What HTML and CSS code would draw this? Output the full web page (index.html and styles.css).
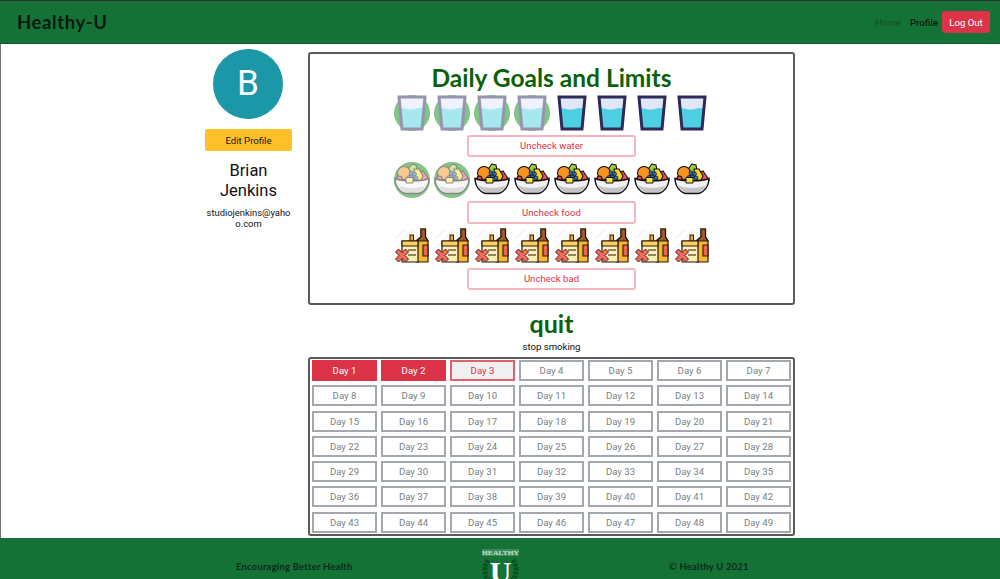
FILE: index.html
```html
<!DOCTYPE html>
<html>
<head>
    <title>Healthy-U</title>
    <link rel="stylesheet" href="styles.css">
</head>
<body>
    <svg class="sprites" width="0" height="0">
        <filter id="fade" color-interpolation-filters="sRGB">
            <feComponentTransfer>
                <feFuncR type="linear" slope="0.5" intercept="0.5"/>
                <feFuncG type="linear" slope="0.5" intercept="0.5"/>
                <feFuncB type="linear" slope="0.5" intercept="0.5"/>
            </feComponentTransfer>
        </filter>
        <symbol id="water" viewBox="0 0 36 36">
            <path d="M5 2h26l-3 32H8z" fill="#dfe6f8"/>
            <path d="M6.200 14c4-2 6 1 11 .6s7-2.600 13-1L28 34H8z" fill="#4fd0e2"/>
            <path d="M5 2h26l-3 32H8z" fill="none" stroke="#2e2a5a" stroke-width="3" stroke-linejoin="miter"/>
        </symbol>
        <symbol id="food" viewBox="0 0 36 36">
            <g stroke="#111" stroke-width="1.100">
                <path d="M14 7l4-5 4 1 1 5-4 5z" fill="#9ccb3b"/>
                <path d="M26 10l3-1 6 9-9 1z" fill="#ef4f62"/>
                <path d="M20 7l5 0 4 7-3 6-5-4z" fill="#ffd21f"/>
                <circle cx="10" cy="11" r="6.500" fill="#f7941d"/>
                <circle cx="5.500" cy="16.500" r="2.500" fill="#e8435a"/>
            </g>
            <g fill="#2a6fc0" stroke="#111" stroke-width=".7">
                <circle cx="17" cy="11" r="2"/><circle cx="20.500" cy="12" r="2"/>
                <circle cx="18" cy="15" r="2"/><circle cx="22" cy="16" r="2"/>
                <circle cx="15" cy="15.500" r="2"/>
            </g>
            <path d="M1 16.500c6 3 28 3 34 0 0 8-5 13-10 15H11C6 29.500 1 24.500 1 16.500z" fill="#f1f1f2"/>
            <path d="M4 23c6 4 22 4 28 0-2 4-5 6.500-8 8H12c-3-1.500-6-4-8-8z" fill="#c4c4c8"/>
            <path d="M1 16.500c6 3 28 3 34 0 0 8-5 13-10 15H11C6 29.500 1 24.500 1 16.500z" fill="none" stroke="#111" stroke-width="1.400"/>
            <path d="M12 15.500h7v5.500h-7z" fill="#ffe14d" stroke="#111" stroke-width="1"/>
        </symbol>
        <symbol id="bad" viewBox="0 0 36 36">
            <path d="M2 10L10 2M2 20L20 2M2 29L6 25" stroke="#eeeeee" stroke-width="1.200"/>
            <path d="M16 7h3.500v8H16z" fill="#f2a93a" stroke="#2a1a10" stroke-width="1.100"/>
            <path d="M27 1h4.500v8l2.500 4v21H22V13l5-4z" fill="#f7b733" stroke="#2a1a10" stroke-width="1.200"/>
            <path d="M27 1h4.500v8l2.500 4H22l5-4z" fill="#9b5b2c" stroke="#2a1a10" stroke-width="1.200"/>
            <path d="M29 17h5v11h-5z" fill="#f0664a" stroke="#2a1a10" stroke-width="1.100"/>
            <path d="M8 13h16v21H8z" fill="#fdf0b8" stroke="#2a1a10" stroke-width="1.200"/>
            <path d="M8 13h16v5H8z" fill="#fbd25f" stroke="#2a1a10" stroke-width="1.100"/>
            <path d="M14 22h8M14 27h8" stroke="#2a1a10" stroke-width="1.200"/>
            <path d="M1.500 24l3-3 3.500 3.500 3.500-3.500 3 3-3.500 3.500 3.500 3.500-3 3-3.500-3.500-3.500 3.500-3-3 3.500-3.500z" fill="#f4695a" stroke="#2a1a10" stroke-width=".9"/>
        </symbol>
    </svg>

    <header class="topbar">
        <div class="brand">Healthy-U</div>
        <nav class="topnav">
            <a class="nav-link">Home</a>
            <a class="nav-link nav-active">Profile</a>
            <button class="btn-logout" type="button">Log Out</button>
        </nav>
    </header>

    <main class="page">
        <aside class="sidebar">
            <div class="avatar">B</div>
            <button class="btn-edit" type="button">Edit Profile</button>
            <div class="user-name">Brian Jenkins</div>
            <div class="user-email">studiojenkins@yahoo.com</div>
        </aside>

        <section class="content">
            <div class="goals">
                <h1 class="goals-title">Daily Goals and Limits</h1>

                <div class="icon-row">
                    <span class="icon-item checked"><svg class="icon"><use href="#water"/></svg></span>
                    <span class="icon-item checked"><svg class="icon"><use href="#water"/></svg></span>
                    <span class="icon-item checked"><svg class="icon"><use href="#water"/></svg></span>
                    <span class="icon-item checked"><svg class="icon"><use href="#water"/></svg></span>
                    <span class="icon-item"><svg class="icon"><use href="#water"/></svg></span>
                    <span class="icon-item"><svg class="icon"><use href="#water"/></svg></span>
                    <span class="icon-item"><svg class="icon"><use href="#water"/></svg></span>
                    <span class="icon-item"><svg class="icon"><use href="#water"/></svg></span>
                </div>
                <button class="btn-uncheck" type="button">Uncheck water</button>

                <div class="icon-row">
                    <span class="icon-item checked"><svg class="icon"><use href="#food"/></svg></span>
                    <span class="icon-item checked"><svg class="icon"><use href="#food"/></svg></span>
                    <span class="icon-item"><svg class="icon"><use href="#food"/></svg></span>
                    <span class="icon-item"><svg class="icon"><use href="#food"/></svg></span>
                    <span class="icon-item"><svg class="icon"><use href="#food"/></svg></span>
                    <span class="icon-item"><svg class="icon"><use href="#food"/></svg></span>
                    <span class="icon-item"><svg class="icon"><use href="#food"/></svg></span>
                    <span class="icon-item"><svg class="icon"><use href="#food"/></svg></span>
                </div>
                <button class="btn-uncheck" type="button">Uncheck food</button>

                <div class="icon-row">
                    <span class="icon-item"><svg class="icon"><use href="#bad"/></svg></span>
                    <span class="icon-item"><svg class="icon"><use href="#bad"/></svg></span>
                    <span class="icon-item"><svg class="icon"><use href="#bad"/></svg></span>
                    <span class="icon-item"><svg class="icon"><use href="#bad"/></svg></span>
                    <span class="icon-item"><svg class="icon"><use href="#bad"/></svg></span>
                    <span class="icon-item"><svg class="icon"><use href="#bad"/></svg></span>
                    <span class="icon-item"><svg class="icon"><use href="#bad"/></svg></span>
                    <span class="icon-item"><svg class="icon"><use href="#bad"/></svg></span>
                </div>
                <button class="btn-uncheck" type="button">Uncheck bad</button>
            </div>

            <h2 class="habit-title">quit</h2>
            <p class="habit-text">stop smoking</p>

            <div class="days">
                <button class="day day-done" type="button">Day 1</button>
                <button class="day day-done" type="button">Day 2</button>
                <button class="day day-current" type="button">Day 3</button>
                <button class="day" type="button">Day 4</button>
                <button class="day" type="button">Day 5</button>
                <button class="day" type="button">Day 6</button>
                <button class="day" type="button">Day 7</button>
                <button class="day" type="button">Day 8</button>
                <button class="day" type="button">Day 9</button>
                <button class="day" type="button">Day 10</button>
                <button class="day" type="button">Day 11</button>
                <button class="day" type="button">Day 12</button>
                <button class="day" type="button">Day 13</button>
                <button class="day" type="button">Day 14</button>
                <button class="day" type="button">Day 15</button>
                <button class="day" type="button">Day 16</button>
                <button class="day" type="button">Day 17</button>
                <button class="day" type="button">Day 18</button>
                <button class="day" type="button">Day 19</button>
                <button class="day" type="button">Day 20</button>
                <button class="day" type="button">Day 21</button>
                <button class="day" type="button">Day 22</button>
                <button class="day" type="button">Day 23</button>
                <button class="day" type="button">Day 24</button>
                <button class="day" type="button">Day 25</button>
                <button class="day" type="button">Day 26</button>
                <button class="day" type="button">Day 27</button>
                <button class="day" type="button">Day 28</button>
                <button class="day" type="button">Day 29</button>
                <button class="day" type="button">Day 30</button>
                <button class="day" type="button">Day 31</button>
                <button class="day" type="button">Day 32</button>
                <button class="day" type="button">Day 33</button>
                <button class="day" type="button">Day 34</button>
                <button class="day" type="button">Day 35</button>
                <button class="day" type="button">Day 36</button>
                <button class="day" type="button">Day 37</button>
                <button class="day" type="button">Day 38</button>
                <button class="day" type="button">Day 39</button>
                <button class="day" type="button">Day 40</button>
                <button class="day" type="button">Day 41</button>
                <button class="day" type="button">Day 42</button>
                <button class="day" type="button">Day 43</button>
                <button class="day" type="button">Day 44</button>
                <button class="day" type="button">Day 45</button>
                <button class="day" type="button">Day 46</button>
                <button class="day" type="button">Day 47</button>
                <button class="day" type="button">Day 48</button>
                <button class="day" type="button">Day 49</button>
            </div>
        </section>
    </main>

    <footer class="footer">
        <div class="footer-text footer-left">Encouraging Better Health</div>
        <svg class="footer-logo" viewBox="0 0 40 44">
            <rect x="1" y="1" width="37" height="7" fill="#3d8c57"/>
            <text class="logo-word" x="19.500" y="7" text-anchor="middle" textLength="37" lengthAdjust="spacingAndGlyphs">HEALTHY</text>
            <path d="M7 12c-5 7-4 19 5 25M32 12c5 7 4 19-5 25" fill="none" stroke="#0d4f22" stroke-width="5" stroke-dasharray="3 1"/>
            <text class="logo-letter" x="19.500" y="34" text-anchor="middle">U</text>
        </svg>
        <div class="footer-text footer-right">© Healthy U 2021</div>
    </footer>
</body>
</html>
```

FILE: styles.css
```css
html, body {
    height: 579px;
    overflow: hidden;
}
body {
    margin: 0;
    font-family: Roboto, Arial, sans-serif;
    font-size: 9.600px;
    background: #fff;
    color: #111;
}
button {
    font-family: inherit;
    font-size: 9.600px;
    cursor: pointer;
}
.sprites {
    display: block;
    height: 0;
}

/* top bar */
.topbar {
    display: flex;
    align-items: center;
    justify-content: space-between;
    height: 42px;
    padding: 0 10px 0 17px;
    background: #157236;
    border-top: 1px solid #333;
    border-bottom: 1px solid #0f5a2a;
}
.brand {
    font-family: Lato, Arial, sans-serif;
    font-size: 18.500px;
    font-weight: 700;
    letter-spacing: .6px;
    color: #0a1a10;
}
.topnav {
    display: flex;
    align-items: center;
}
.nav-link {
    margin-right: 9px;
    color: #0d4f22;
}
.nav-active {
    margin-right: 4px;
    color: #06200f;
    font-weight: 500;
}
.btn-logout {
    width: 48px;
    height: 22px;
    padding: 0;
    border: none;
    border-radius: 3px;
    background: #dc3349;
    color: #fff;
}

/* page */
.page {
    display: flex;
    justify-content: center;
    gap: 16px;
    height: 494px;
    box-shadow: inset 1px 0 #777;
}
.sidebar {
    width: 87px;
    display: flex;
    flex-direction: column;
    align-items: center;
    padding-top: 5px;
    text-align: center;
}
.avatar {
    width: 70px;
    height: 70px;
    margin-right: 1px;
    border-radius: 50%;
    background: #1b97a8;
    color: #fff;
    font-size: 35px;
    line-height: 70px;
}
.btn-edit {
    width: 87px;
    height: 22px;
    margin-top: 10px;
    padding: 0;
    border: none;
    border-radius: 2px;
    background: #ffc02a;
    color: #111;
}
.user-name {
    margin-top: 10px;
    font-size: 16.500px;
    line-height: 20px;
    padding: 0 14px;
}
.user-email {
    margin-top: 6px;
    width: 87px;
    font-size: 9.400px;
    line-height: 11px;
    word-break: break-all;
}
.content {
    width: 487px;
    padding-top: 8px;
    text-align: center;
}

/* goals box */
.goals {
    height: 253px;
    box-sizing: border-box;
    border: 2px solid #5a5a5a;
    border-radius: 3px;
    display: flex;
    flex-direction: column;
    align-items: center;
}
.goals-title {
    margin: 7px 0 0;
    font-family: Lato, Arial, sans-serif;
    font-size: 24.500px;
    line-height: 33px;
    font-weight: 700;
    color: #0b6108;
}
.icon-row {
    display: flex;
    height: 36px;
    margin-top: 1px;
}
.icon-item {
    width: 36px;
    height: 36px;
    margin: 0 2px;
    border-radius: 50%;
}
.icon {
    display: block;
    width: 36px;
    height: 36px;
}
.checked {
    background: #83c487;
}
.checked .icon {
    filter: url(#fade);
}
.btn-uncheck {
    width: 169px;
    height: 22.500px;
    margin: 3.500px 0;
    padding: 0;
    border: 2px solid #f6b6bf;
    border-radius: 3px;
    background: #fff;
    color: #dc3349;
}

/* habit */
.habit-title {
    margin: 2px 0 0;
    font-family: Lato, Arial, sans-serif;
    font-size: 25px;
    line-height: 32px;
    font-weight: 700;
    color: #0b6108;
}
.habit-text {
    margin: 1px 0 0;
    line-height: 14px;
}
.days {
    display: grid;
    grid-template-columns: repeat(7, 65px);
    grid-auto-rows: 21px;
    column-gap: 4px;
    row-gap: 4.300px;
    justify-content: center;
    box-sizing: border-box;
    height: 179px;
    margin-top: 3px;
    padding: 1px 0;
    border: 2px solid #5a5a5a;
    border-radius: 3px;
}
.day {
    padding: 0;
    border: 2px solid #a3a8ae;
    background: #fff;
    color: #777f87;
}
.day-done {
    border-color: #dc3349;
    background: #dc3349;
    color: #fff;
}
.day-current {
    border-color: #e4606f;
    background: #f0f0f0;
    color: #dc3349;
}

/* footer */
.footer {
    display: flex;
    height: 41px;
    background: #157236;
}
.footer-text {
    margin-top: 22px;
    font-family: Lato, Arial, sans-serif;
    font-size: 9.400px;
    line-height: 13px;
    font-weight: 700;
    color: #0c2a17;
    letter-spacing: .25px;
}
.footer-left {
    margin-left: 236px;
    width: 245px;
}
.footer-logo {
    width: 40px;
    height: 44px;
    margin-top: 10px;
    flex: none;
}
.footer-right {
    margin-left: 148px;
}
.logo-word {
    font-family: "Liberation Serif", serif;
    font-size: 7px;
    font-weight: 700;
    fill: #c5e0cc;
}
.logo-letter {
    font-family: "Liberation Serif", serif;
    font-size: 30px;
    font-weight: 700;
    fill: #fff;
}
```
